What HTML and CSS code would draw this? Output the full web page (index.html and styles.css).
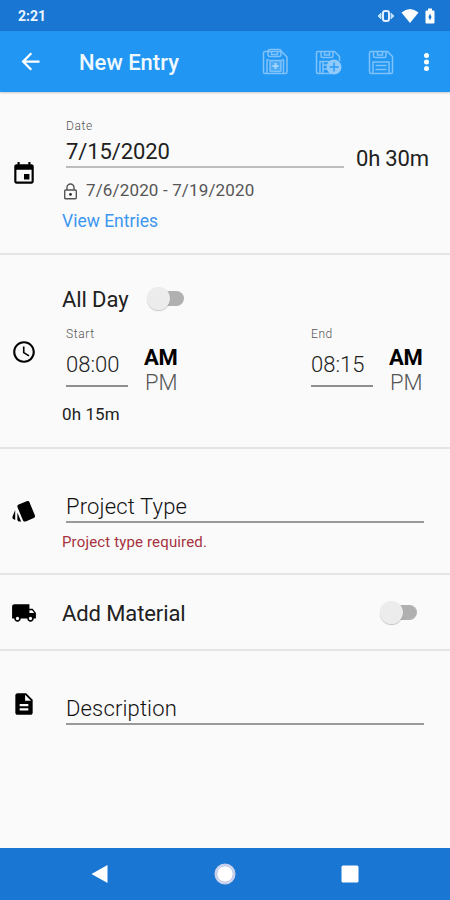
FILE: index.html
```
<!DOCTYPE html>
<html lang="en">
<head>
    <meta charset="UTF-8">
    <meta name="viewport" content="width=device-width, initial-scale=1.0">
    <title>New Entry</title>
    <link rel="stylesheet" href="styles.css">
</head>
<body>
    <div class="screen">
        <div class="status-bar">
            <span class="clock">2:21</span>
            <div class="status-icons">
                <svg width="18" height="16" viewBox="0 0 18 16">
                    <path d="M1 8 4 5v6zM17 8l-3-3v6z" fill="#bbdcfa" stroke="#bbdcfa" stroke-width="1"/>
                    <rect x="6" y="3" width="6" height="10" rx="2" fill="#1976d2" stroke="#e0effd" stroke-width="2"/>
                </svg>
                <svg width="18" height="16" viewBox="0 0 18 16">
                    <path d="M0.500 4.500Q9-2.500 17.500 4.500L9 15z" fill="#fff"/>
                </svg>
                <svg width="10" height="16" viewBox="0 0 10 16">
                    <path d="M3 0.500h4v2h1.500q1 0 1 1V14.500q0 1-1 1H1.500q-1 0-1-1V3.500q0-1 1-1H3z" fill="#fff"/>
                    <path d="M5 5.500 6.500 9 5 12.500 3.500 9z" fill="#1976d2"/>
                </svg>
            </div>
        </div>

        <div class="app-bar">
            <svg class="back" width="27" height="27" viewBox="0 0 24 24">
                <path d="M20 11H7.830l5.590-5.590L12 4l-8 8 8 8 1.410-1.410L7.830 13H20z" fill="#fff"/>
            </svg>
            <h1>New Entry</h1>
            <div class="actions">
                <svg width="28" height="28" viewBox="0 0 28 28" fill="none" stroke="#80c2fa" stroke-width="1.500">
                    <path d="M4 3.500H20.500L26 9V24q0 1.500-1.500 1.500H4Q2.500 25.500 2.500 24V5Q2.500 3.500 4 3.500z"/>
                    <rect x="7" y="1.500" width="13" height="7" rx="2"/>
                    <path d="M10.500 3v3.500h6V3M6 25V12h2.500M22.500 25V12H20"/>
                    <rect x="9" y="12.500" width="11" height="11" rx="1" fill="#4cabf7"/>
                    <path d="M14.500 15v6M11.500 18h6" stroke="#a5d5fb" stroke-width="2"/>
                </svg>
                <svg width="28" height="28" viewBox="0 0 28 28" fill="none" stroke="#80c2fa" stroke-width="1.500">
                    <path d="M18 25.500H4Q2.500 25.500 2.500 24V5Q2.500 3.500 4 3.500H20.500L25.500 8.500V13"/>
                    <path d="M7 3.500V8q0 1.500 1.500 1.500h9Q19 9.500 19 8V3.500M10.500 4v3h5V4M6 25V13.500h12M9 17h6M9 21h5M9 14v11"/>
                    <circle cx="20" cy="19" r="7.500" fill="#90cafa" stroke="none"/>
                    <path d="M20 14.500v9M15.500 19h9" stroke="#2e9bf5"/>
                </svg>
                <svg width="28" height="28" viewBox="0 0 28 28" fill="none" stroke="#80c2fa" stroke-width="1.500">
                    <path d="M4 3.500H20.500L25.500 8.500V24q0 1.500-1.500 1.500H4Q2.500 25.500 2.500 24V5Q2.500 3.500 4 3.500z"/>
                    <path d="M6.500 3.500V8q0 1.500 1.500 1.500h9.500Q19 9.500 19 8V3.500M10.500 4v3h5V4M6 25V14h16v11M8.500 17.500h11M8.500 21.500h11"/>
                </svg>
            </div>
            <svg class="more" width="8" height="22" viewBox="0 0 8 22" fill="#fff">
                <circle cx="3.500" cy="4.500" r="2.500"/>
                <circle cx="3.500" cy="11" r="2.500"/>
                <circle cx="3.500" cy="17.500" r="2.500"/>
            </svg>
        </div>

        <div class="section date-section">
            <svg class="icon" viewBox="0 0 24 24">
                <path d="M17 12h-5v5h5zM16 1v2H8V1H6v2H5c-1.110 0-1.990.9-1.990 2L3 19c0 1.100.890 2 2 2h14c1.100 0 2-.9 2-2V5c0-1.100-.9-2-2-2h-1V1zm3 18H5V8h14z"/>
            </svg>
            <div class="content">
                <div class="date-row">
                    <div class="field">
                        <label>Date</label>
                        <div class="value">7/15/2020</div>
                    </div>
                    <span class="total">0h 30m</span>
                </div>
                <div class="period">
                    <svg width="17" height="18" viewBox="0 0 17 18" fill="none" stroke="#555" stroke-width="1.400">
                        <path d="M5 7V4.500a3.500 3.500 0 0 1 7 0V7"/>
                        <rect x="2.700" y="7" width="11.600" height="8.800" rx="1"/>
                        <circle cx="8.500" cy="11.400" r="1.300" fill="#222" stroke="none"/>
                    </svg>
                    <span>7/6/2020 - 7/19/2020</span>
                </div>
                <a class="view-link">View Entries</a>
            </div>
        </div>

        <div class="section time-section">
            <svg class="icon" viewBox="0 0 24 24">
                <path d="M11.990 2C6.470 2 2 6.480 2 12s4.470 10 9.990 10C17.520 22 22 17.520 22 12S17.520 2 11.990 2zM12 20c-4.420 0-8-3.580-8-8s3.580-8 8-8 8 3.580 8 8-3.580 8-8 8zm.5-13H11v6l5.250 3.150.75-1.230-4.500-2.670z"/>
            </svg>
            <div class="content">
                <div class="all-day">
                    <span>All Day</span>
                    <div class="switch"></div>
                </div>
                <div class="times">
                    <div class="time">
                        <div class="field">
                            <label>Start</label>
                            <div class="value">08:00</div>
                        </div>
                        <div class="ampm">
                            <b>AM</b>
                            <span>PM</span>
                        </div>
                    </div>
                    <div class="time">
                        <div class="field">
                            <label>End</label>
                            <div class="value">08:15</div>
                        </div>
                        <div class="ampm">
                            <b>AM</b>
                            <span>PM</span>
                        </div>
                    </div>
                </div>
                <div class="duration">0h 15m</div>
            </div>
        </div>

        <div class="section project-section">
            <svg class="icon" viewBox="0 0 24 24">
                <path d="M2.530 19.650l1.340.560v-9.030l-2.430 5.860c-.410 1.020.080 2.190 1.090 2.610zm19.500-3.700L17.070 3.980c-.310-.750-1.040-1.210-1.810-1.230-.260 0-.530.040-.790.150L7.100 5.950c-.750.310-1.210 1.030-1.230 1.800-.010.270.040.540.150.800l4.960 11.970c.310.760 1.050 1.220 1.830 1.230.260 0 .520-.050.770-.150l7.360-3.050c1.020-.420 1.510-1.590 1.090-2.600zM5.880 19.750c0 1.100.9 2 2 2h1.450l-3.450-8.340z"/>
            </svg>
            <div class="content">
                <div class="input">Project Type</div>
                <div class="error">Project type required.</div>
            </div>
        </div>

        <div class="section material-section">
            <svg class="icon" viewBox="0 0 24 24">
                <path d="M20 8h-3V4H3c-1.100 0-2 .9-2 2v11h2c0 1.660 1.340 3 3 3s3-1.340 3-3h6c0 1.660 1.340 3 3 3s3-1.340 3-3h2v-5zM6 18.500c-.830 0-1.500-.670-1.500-1.500s.670-1.500 1.500-1.500 1.500.670 1.500 1.500-.670 1.500-1.500 1.500zm13.500-9l1.960 2.500H17V9.500zm-1.500 9c-.830 0-1.500-.670-1.500-1.500s.670-1.500 1.500-1.500 1.500.670 1.500 1.500-.670 1.500-1.500 1.500z"/>
            </svg>
            <div class="content">
                <span>Add Material</span>
                <div class="switch"></div>
            </div>
        </div>

        <div class="section description-section">
            <svg class="icon" viewBox="0 0 24 24">
                <path d="M14 2H6c-1.100 0-1.990.9-1.990 2L4 20c0 1.100.890 2 1.990 2H18c1.100 0 2-.9 2-2V8zm2 16H8v-2h8zm0-4H8v-2h8zm-3-5V3.500L18.500 9z"/>
            </svg>
            <div class="content">
                <div class="input">Description</div>
            </div>
        </div>

        <div class="nav-bar">
            <svg width="22" height="22" viewBox="0 0 22 22"><path d="M18.500 2v18L2.500 11z" fill="#fff"/></svg>
            <svg width="22" height="22" viewBox="0 0 22 22">
                <circle cx="11" cy="11" r="9.800" fill="#fff" stroke="#c5cdeb" stroke-width="1.500"/>
                <circle cx="11" cy="11" r="8.300" fill="none" stroke="#8fa5d8" stroke-width="0.800"/>
            </svg>
            <svg width="22" height="22" viewBox="0 0 22 22"><rect x="2.500" y="2.500" width="17" height="17" rx="1.500" fill="#fff"/></svg>
        </div>
    </div>
</body>
</html>
```
FILE: styles.css
```
* {
    box-sizing: border-box;
}
body {
    margin: 0;
    font-family: Roboto, sans-serif;
    background-color: #fafafa;
    color: #212121;
}
.screen {
    width: 450px;
    height: 900px;
    display: flex;
    flex-direction: column;
    overflow: hidden;
}
svg {
    display: block;
    flex-shrink: 0;
}
.status-bar {
    height: 31px;
    padding: 1px 15px 0 18px;
    background-color: #1976d2;
    display: flex;
    align-items: center;
    justify-content: space-between;
}
.clock {
    color: #e9f4fe;
    font-size: 14px;
    font-weight: 700;
}
.status-icons {
    display: flex;
    gap: 6px;
}
.app-bar {
    height: 61px;
    padding: 0 19px 0 17px;
    background-color: #2196f3;
    box-shadow: 0 1px 2px rgba(0, 0, 0, 0.2);
    display: flex;
    align-items: center;
}
.app-bar h1 {
    margin: 3px 0 0 35px;
    color: #f0f8ff;
    font-size: 22px;
    font-weight: 500;
    line-height: 26px;
}
.actions {
    display: flex;
    gap: 25px;
    margin-left: auto;
    margin-right: 28px;
}
.section {
    display: flex;
    border-bottom: 2px solid #e5e5e5;
}
.icon {
    width: 26px;
    height: 26px;
    margin: 0 25px 0 11px;
}
.content {
    flex: 1;
}
label {
    display: block;
    color: #555;
    font-size: 12px;
    font-weight: 300;
    line-height: 14px;
    letter-spacing: 0.6px;
}
.value {
    font-size: 22px;
    line-height: 26px;
}
.date-section {
    height: 163px;
    padding-top: 27px;
}
.date-section .icon {
    margin-top: 42px;
}
.date-row {
    display: flex;
    margin-left: 4px;
}
.date-row .field {
    width: 278px;
    height: 49px;
    border-bottom: 2px solid #bdbdbd;
}
.date-row .value {
    margin-top: 6px;
    letter-spacing: -0.1px;
}
.total {
    margin: 27px 0 0 12px;
    font-size: 22px;
    line-height: 26px;
    letter-spacing: -0.2px;
}
.period {
    display: flex;
    align-items: center;
    height: 20px;
    margin-top: 8px;
    color: #555;
    font-size: 17px;
    letter-spacing: 0.15px;
}
.period svg {
    margin-top: 4px;
}
.period span {
    margin-left: 7px;
}
.view-link {
    display: block;
    margin-top: 10px;
    color: #3d96f0;
    font-size: 17.5px;
    line-height: 22px;
}
.time-section {
    height: 194px;
    padding-top: 28px;
}
.time-section .icon {
    margin-top: 56px;
}
.all-day {
    display: flex;
    align-items: center;
    height: 32px;
    font-size: 22px;
    letter-spacing: -0.1px;
}
.all-day .switch {
    margin-left: 19px;
}
.switch {
    position: relative;
    width: 37px;
    height: 24px;
}
.switch::before {
    content: "";
    position: absolute;
    right: 0;
    top: 4px;
    width: 30px;
    height: 15px;
    border-radius: 8px;
    background-color: #b0b0b0;
}
.switch::after {
    content: "";
    position: absolute;
    left: 0;
    top: 0;
    width: 23px;
    height: 23px;
    border-radius: 50%;
    background-color: #ececec;
    box-shadow: 0 1px 1px rgba(0, 0, 0, 0.2);
}
.times {
    display: flex;
    justify-content: space-between;
    margin: 12px 28px 0 4px;
}
.time {
    display: flex;
}
.time .field {
    width: 62px;
    height: 60px;
    border-bottom: 2px solid #8f8f8f;
}
.time .value {
    margin-top: 11px;
    font-weight: 300;
}
.ampm {
    width: 33px;
    margin: 18px 0 0 16px;
    font-size: 22px;
    line-height: 25px;
}
.ampm b,
.ampm span {
    display: block;
}
.ampm b {
    color: #000;
    font-weight: 700;
    letter-spacing: -0.3px;
}
.ampm span {
    padding-left: 1px;
    color: #555;
    font-weight: 300;
}
.duration {
    margin-top: 8px;
    font-size: 17px;
    line-height: 22px;
    letter-spacing: 0.1px;
}
.project-section {
    height: 126px;
    padding-top: 44px;
}
.project-section .icon {
    margin-top: 5px;
}
.input {
    width: 358px;
    height: 30px;
    margin-left: 4px;
    border-bottom: 2px solid #999;
    color: #111;
    font-size: 22px;
    font-weight: 300;
    line-height: 28px;
    letter-spacing: 0.15px;
}
.error {
    margin-top: 9px;
    color: #a83240;
    font-size: 15px;
    line-height: 20px;
    letter-spacing: 0.15px;
}
.material-section {
    height: 76px;
    padding-top: 2px;
    align-items: center;
}
.material-section .content {
    display: flex;
    justify-content: space-between;
    align-items: center;
    padding-right: 33px;
    font-size: 22px;
    letter-spacing: -0.1px;
}
.description-section {
    flex: 1;
    padding-top: 44px;
    border-bottom: none;
}
.description-section .icon {
    margin-top: -4px;
}
.nav-bar {
    height: 52px;
    padding: 0 89px;
    background-color: #1976d2;
    display: flex;
    align-items: center;
    justify-content: space-between;
}
```
